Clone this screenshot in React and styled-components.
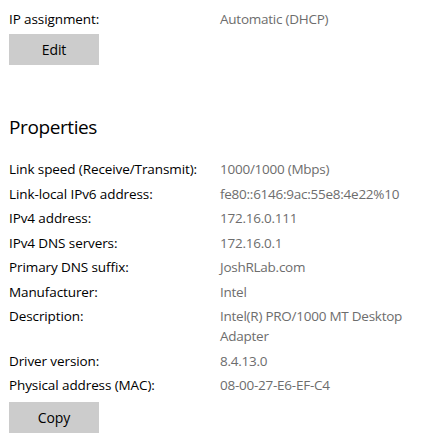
import React from 'react';
import styled, { createGlobalStyle } from 'styled-components';

const GlobalStyle = createGlobalStyle`
    html, body {
        margin: 0;
        padding: 0;
        background: #ffffff;
    }
    body {
        font-family: "Open Sans", "Noto Sans", sans-serif;
        font-size: 13.5px;
        letter-spacing: -0.1px;
        color: #000000;
    }
`;

const properties = [
    { label: "Link speed (Receive/Transmit):", value: "1000/1000 (Mbps)" },
    { label: "Link-local IPv6 address:", value: "fe80::6146:9ac:55e8:4e22%10" },
    { label: "IPv4 address:", value: "172.16.0.111" },
    { label: "IPv4 DNS servers:", value: "172.16.0.1" },
    { label: "Primary DNS suffix:", value: "JoshRLab.com" },
    { label: "Manufacturer:", value: "Intel" },
    { label: "Description:", value: "Intel(R) PRO/1000 MT Desktop Adapter" },
    { label: "Driver version:", value: "8.4.13.0" },
    { label: "Physical address (MAC):", value: "08-00-27-E6-EF-C4" },
];

const Page = styled.div`
    padding: 9px 0 0 9px;
    width: 416px;
`;

const Row = styled.div`
    display: grid;
    grid-template-columns: 211px 200px;
    line-height: 20px;
    margin-top: ${props => props.gap || 0}px;
`;

const Label = styled.div`
    color: #000000;
`;

const Value = styled.div`
    color: #6d6d6d;
    letter-spacing: -0.25px;
`;

const Button = styled.button`
    display: block;
    width: 90px;
    height: 31px;
    margin-top: ${props => props.gap}px;
    padding: 0;
    border: none;
    background: #cccccc;
    font-family: inherit;
    font-size: 14px;
    letter-spacing: -0.1px;
    color: #000000;
`;

const Heading = styled.h2`
    margin: 49px 0 0 0;
    font-size: 19px;
    font-weight: 400;
    letter-spacing: -0.4px;
    line-height: 26px;
`;

const List = styled.div`
    margin-top: 19px;
`;

const App = () => (
    <Page>
        <GlobalStyle />
        <Row>
            <Label>IP assignment:</Label>
            <Value>Automatic (DHCP)</Value>
        </Row>
        <Button gap={5}>Edit</Button>

        <Heading>Properties</Heading>

        <List>
            {properties.map((item, index) => (
                <Row key={index} gap={index === 0 ? 0 : 4.5}>
                    <Label>{item.label}</Label>
                    <Value>{item.value}</Value>
                </Row>
            ))}
        </List>
        <Button gap={7}>Copy</Button>
    </Page>
);

export default App;
